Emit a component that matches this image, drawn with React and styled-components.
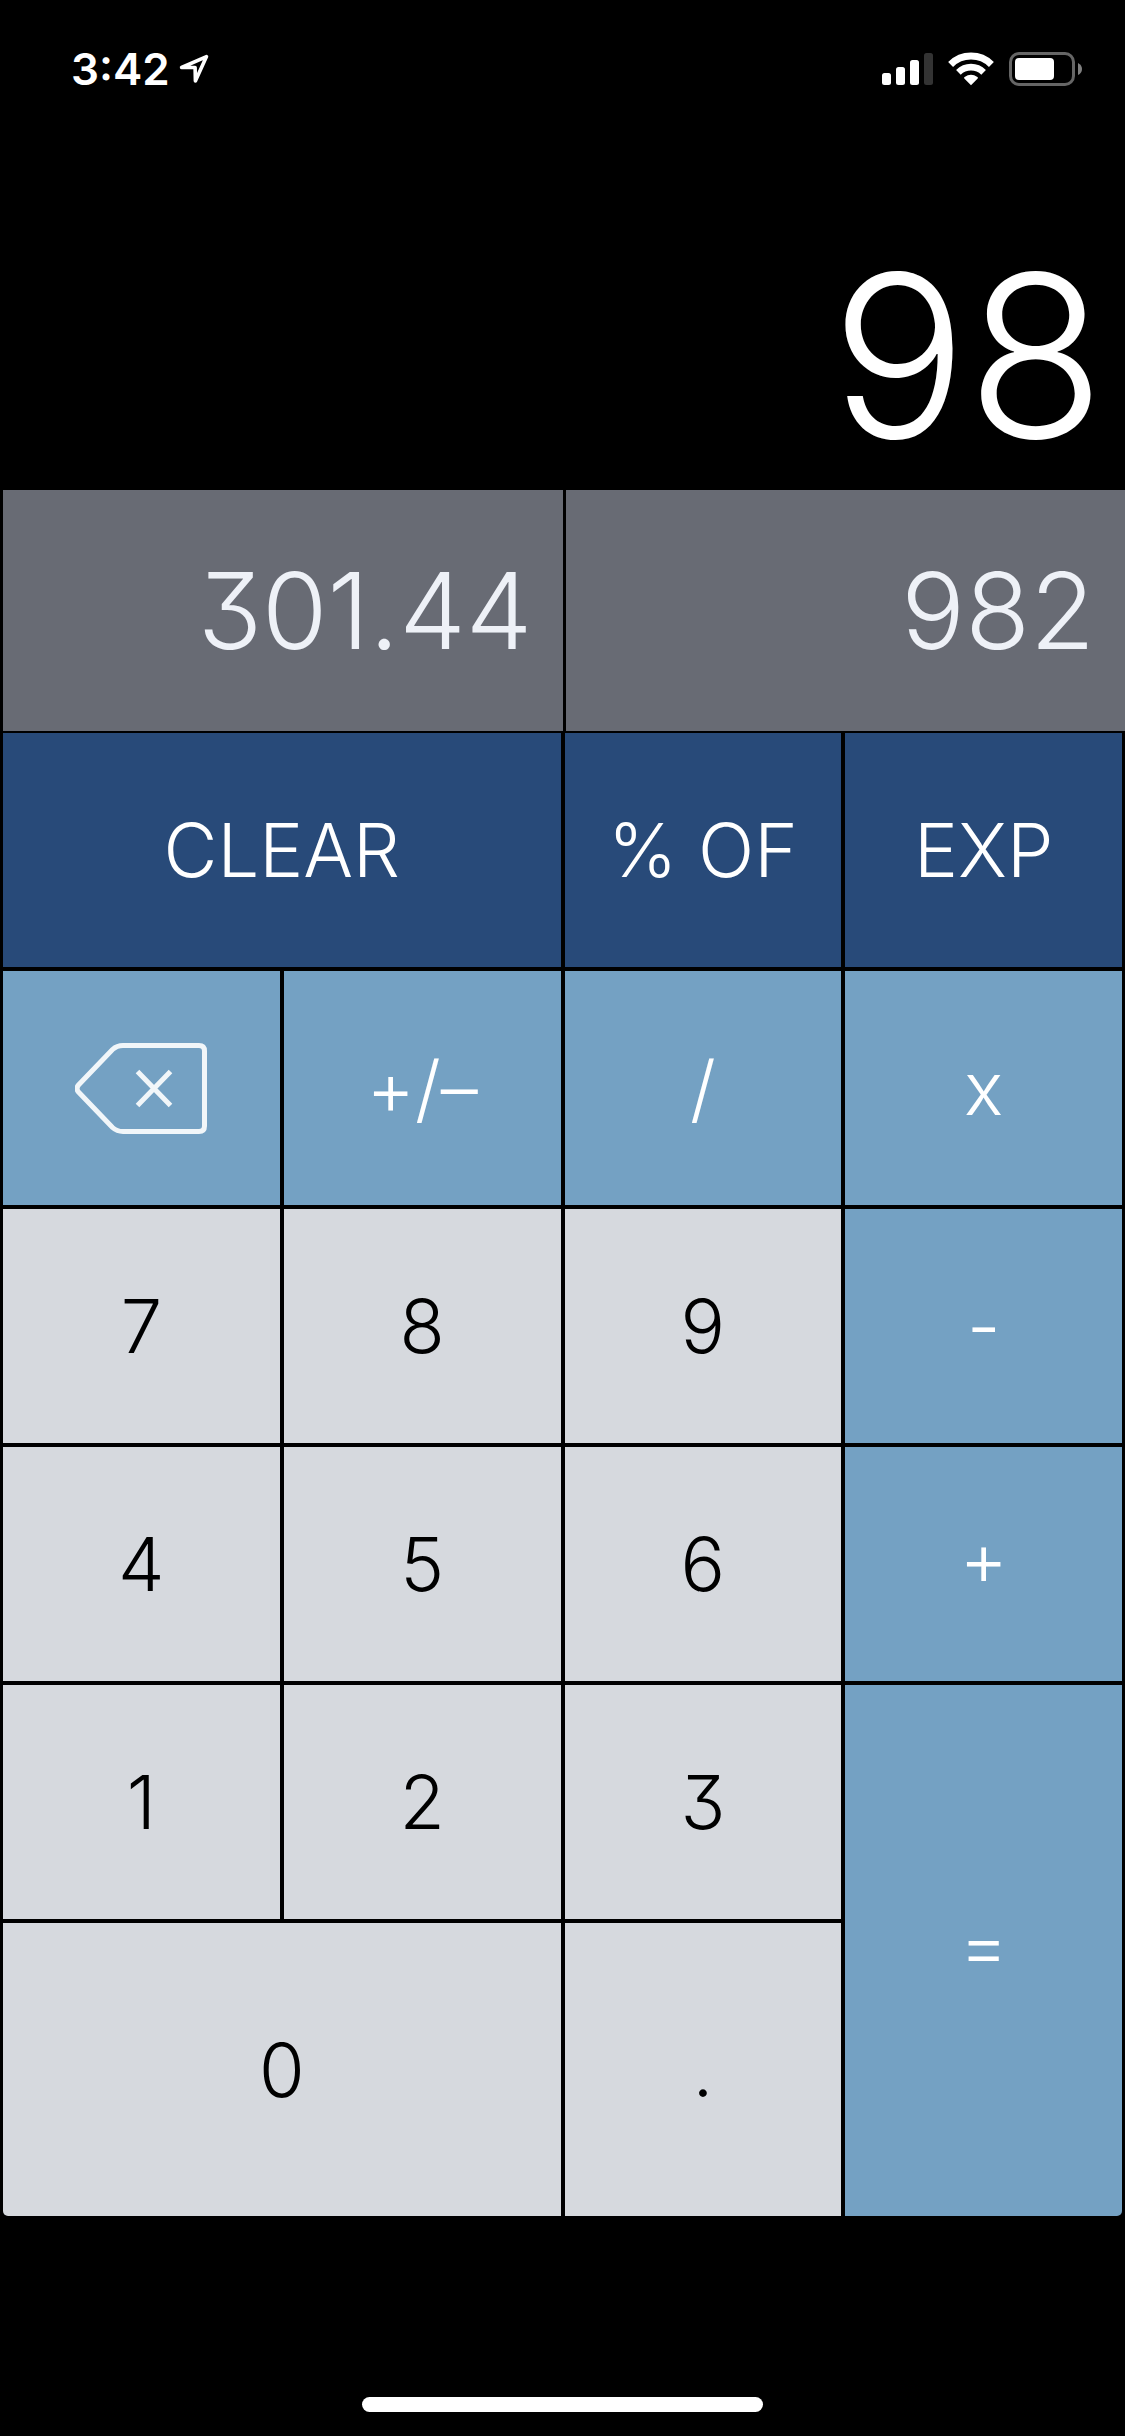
import React from "react";
import styled, { createGlobalStyle, css } from "styled-components";

const GlobalStyle = createGlobalStyle`
  *, *::before, *::after { box-sizing: border-box; }
  body {
    margin: 0;
    background: #000;
    font-family: Inter, "Liberation Sans", sans-serif;
    font-weight: 300;
    font-feature-settings: "cv09" 1;
  }
`;

const Screen = styled.main`
  display: flex;
  flex-direction: column;
  min-height: 100vh;
  background: #000;
  color: #fff;
`;

const StatusBar = styled.header`
  display: flex;
  align-items: center;
  justify-content: space-between;
  height: 138px;
  padding: 0 43px 0 71px;
`;

const StatusGroup = styled.div`
  display: flex;
  align-items: center;
  gap: ${(p) => p.$gap}px;
`;

const Clock = styled.time`
  font-weight: 600;
  font-size: 44px;
  line-height: 54px;
  font-feature-settings: normal;
`;

const Icon = styled.svg`
  display: block;
  flex: none;
`;

const Display = styled.output`
  display: flex;
  align-items: flex-end;
  justify-content: flex-end;
  height: 352px;
  padding: 0 20px 8px;
  font-size: 226px;
  line-height: 252px;
`;

const MemoryRow = styled.section`
  display: grid;
  grid-template-columns: 1fr 1fr;
  gap: 3px;
  height: 243px;
  padding: 0 0 2px 3px;
`;

const MemoryCell = styled.button`
  display: flex;
  align-items: center;
  justify-content: flex-end;
  margin: 0;
  padding: 0 30px;
  border: 0;
  background: #686b74;
  color: #eef1f7;
  font: inherit;
  font-feature-settings: inherit;
  font-size: 106px;
  line-height: 124px;
`;

const Keypad = styled.section`
  flex: 1;
  display: grid;
  grid-template-columns: repeat(4, 1fr);
  grid-template-rows: repeat(5, 234fr) 293fr;
  gap: 4px;
  padding: 0 3px;
`;

const tones = {
  navy: css`
    background: #284a79;
    color: #fff;
  `,
  blue: css`
    background: #74a1c3;
    color: #fff;
  `,
  light: css`
    background: #d6d9de;
    color: #000;
  `,
};

const Key = styled.button`
  display: flex;
  align-items: center;
  justify-content: center;
  margin: 0;
  padding: 0;
  border: 0;
  font: inherit;
  font-feature-settings: "cv09" 1, "case" ${(p) => (p.$raised ? 1 : 0)};
  font-size: 74px;
  line-height: 84px;
  grid-column: span ${(p) => p.$cols || 1};
  grid-row: span ${(p) => p.$rows || 1};
  border-radius: ${(p) => p.$corner || "0"};
  ${(p) => tones[p.$tone]}
`;

const HomeArea = styled.footer`
  display: flex;
  align-items: flex-end;
  justify-content: center;
  height: 220px;
  padding-bottom: 24px;
`;

const HomeIndicator = styled.div`
  width: 401px;
  height: 15px;
  border-radius: 8px;
  background: #fff;
`;

const LocationIcon = () => (
  <Icon width="32" height="32" viewBox="0 0 32 32" aria-hidden="true">
    <path
      d="M28.5 3.600 3.600 14.500h13.500l.3 13.500z"
      fill="none"
      stroke="#fff"
      strokeWidth="3.600"
      strokeLinejoin="round"
    />
  </Icon>
);

const SignalIcon = () => (
  <Icon width="51" height="34" viewBox="0 0 51 34" aria-hidden="true">
    <rect x="0" y="21" width="9" height="12" rx="2.5" fill="#fff" />
    <rect x="14" y="15" width="9" height="18" rx="2.5" fill="#fff" />
    <rect x="28" y="8" width="9" height="25" rx="2.5" fill="#fff" />
    <rect x="42" y="1" width="9" height="32" rx="2.5" fill="#333" />
  </Icon>
);

const WifiIcon = () => (
  <Icon width="46" height="34" viewBox="0 0 46 34" aria-hidden="true">
    <g fill="none" stroke="#fff">
      <path d="M2.6 12.4a29 29 0 0 1 40.8 0" strokeWidth="7" />
      <path d="M10.4 20.3a18 18 0 0 1 25.2 0" strokeWidth="6.6" />
    </g>
    <path
      d="M23 33.2 16.3 26.4q-.6-.8.3-1.3a11 11 0 0 1 12.8 0q.9.5.3 1.3z"
      fill="#fff"
    />
  </Icon>
);

const BatteryIcon = () => (
  <Icon width="73" height="34" viewBox="0 0 73 34" aria-hidden="true">
    <rect
      x="1.5"
      y="1.5"
      width="63"
      height="31"
      rx="8.5"
      fill="none"
      stroke="#666"
      strokeWidth="3"
    />
    <rect x="6" y="6" width="39" height="22" rx="4" fill="#fff" />
    <path d="M69 11q4 2 4 6t-4 6z" fill="#808080" />
  </Icon>
);

const BackspaceIcon = () => (
  <Icon width="132" height="91" viewBox="0 0 132 91" aria-hidden="true">
    <g fill="none" stroke="#fff" strokeOpacity="0.9" strokeWidth="5">
      <path d="M48 2.5h76q5.500 0 5.500 5.500v75q0 5.500-5.500 5.500H48q-6 0-10.500-4L3.500 49q-3-3.500 0-7L37.500 6.500q4.500-4 10.500-4z" />
      <path d="m62.500 28.500 33 34M95.500 28.500l-33 34" />
    </g>
  </Icon>
);

const KEYS = [
  { label: "CLEAR", tone: "navy", cols: 2 },
  { label: "% OF", tone: "navy" },
  { label: "EXP", tone: "navy" },
  { label: <BackspaceIcon />, name: "Backspace", tone: "blue" },
  { label: "+/–", tone: "blue" },
  { label: "/", tone: "blue" },
  { label: "x", tone: "blue" },
  { label: "7", tone: "light" },
  { label: "8", tone: "light" },
  { label: "9", tone: "light" },
  { label: "-", tone: "blue" },
  { label: "4", tone: "light" },
  { label: "5", tone: "light" },
  { label: "6", tone: "light" },
  { label: "+", tone: "blue", raised: true },
  { label: "1", tone: "light" },
  { label: "2", tone: "light" },
  { label: "3", tone: "light" },
  { label: "=", tone: "blue", rows: 2, corner: "0 0 5px 0", raised: true },
  { label: "0", tone: "light", cols: 2, corner: "0 0 0 5px" },
  { label: ".", tone: "light" },
];

export default function App() {
  return (
    <>
      <GlobalStyle />
      <Screen>
        <StatusBar>
          <StatusGroup $gap={8}>
            <Clock>3:42</Clock>
            <LocationIcon />
          </StatusGroup>
          <StatusGroup $gap={15}>
            <SignalIcon />
            <WifiIcon />
            <BatteryIcon />
          </StatusGroup>
        </StatusBar>
        <Display>98</Display>
        <MemoryRow>
          <MemoryCell type="button">301.44</MemoryCell>
          <MemoryCell type="button">982</MemoryCell>
        </MemoryRow>
        <Keypad>
          {KEYS.map((k) => (
            <Key
              key={k.name || k.label}
              type="button"
              aria-label={k.name}
              $tone={k.tone}
              $cols={k.cols}
              $rows={k.rows}
              $corner={k.corner}
              $raised={k.raised}
            >
              {k.label}
            </Key>
          ))}
        </Keypad>
        <HomeArea>
          <HomeIndicator />
        </HomeArea>
      </Screen>
    </>
  );
}
